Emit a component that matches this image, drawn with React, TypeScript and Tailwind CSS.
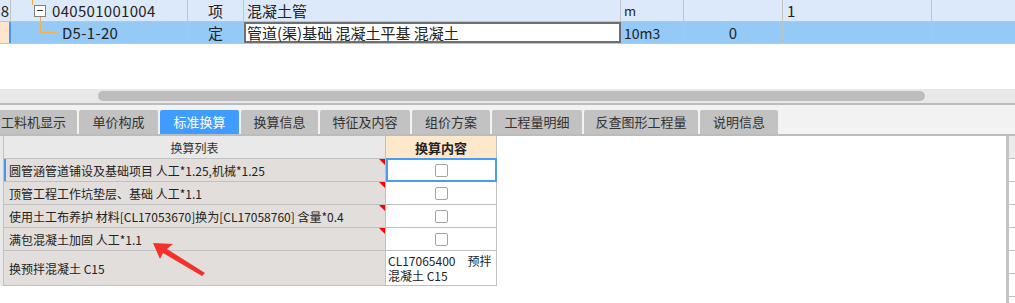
const rows = [
  { text: "圆管涵管道铺设及基础项目 人工*1.25,机械*1.25", active: true },
  { text: "顶管工程工作坑垫层、基础 人工*1.1" },
  { text: "使用土工布养护 材料[CL17053670]换为[CL17058760] 含量*0.4" },
  { text: "满包混凝土加固 人工*1.1" },
];

const tabs = [
  { label: "工料机显示", w: "w-[87px]" },
  { label: "单价构成", w: "w-[79px]" },
  { label: "标准换算", w: "w-[79px]", active: true },
  { label: "换算信息", w: "w-[77px]" },
  { label: "特征及内容", w: "w-[90px]" },
  { label: "组价方案", w: "w-[78px]" },
  { label: "工程量明细", w: "w-[90px]" },
  { label: "反查图形工程量", w: "w-[114px]" },
  { label: "说明信息", w: "w-[78px]" },
];

function Checkbox() {
  return <div className="w-[13px] h-[13px] rounded-[2px] border border-[#a3a3a3] bg-white" />;
}

function RedMark() {
  // 단가 수정 표시 (빨간 삼각형)
  return (
    <svg className="absolute right-0 top-0" width="6" height="6" viewBox="0 0 6 6">
      <polygon points="0,0 6,0 6,6" fill="#ff0000" />
    </svg>
  );
}

export default function App() {
  return (
    <div className="relative w-[1015px] h-[303px] overflow-hidden bg-white font-['Noto_Sans_CJK_SC',sans-serif] text-[#222]">
      {/* 상단 그리드 */}
      <div className="flex h-[22px] border-b border-[#c3c3c3] bg-[#dce9fb] text-[15px] leading-none">
        <div className="w-[11px] shrink-0 border-r border-[#c3c3c3] flex items-center justify-end pr-[1px]">8</div>
        <div className="relative w-[177px] shrink-0 border-r border-[#c3c3c3] flex items-center pl-[23px]">
          <svg className="absolute left-0 top-0" width="40" height="22">
            <line x1="21.5" y1="0" x2="21.5" y2="5" stroke="#f5b04a" />
            <line x1="29.5" y1="17" x2="29.5" y2="22" stroke="#f5b04a" />
          </svg>
          <div className="relative w-[12px] h-[12px] border border-[#808080] bg-white flex items-center justify-center">
            <div className="w-[6px] h-[1px] bg-[#333]" />
          </div>
          <span className="ml-[6px] tracking-[0.3px]">040501001004</span>
        </div>
        <div className="w-[56px] shrink-0 border-r border-[#c3c3c3] flex items-center justify-center">项</div>
        <div className="w-[377px] shrink-0 border-r border-[#c3c3c3] flex items-center pl-[3px]">混凝土管</div>
        <div className="w-[63px] shrink-0 border-r border-[#c3c3c3] flex items-center pl-[3px] text-[13px]">m</div>
        <div className="w-[99px] shrink-0 border-r border-[#c3c3c3]" />
        <div className="w-[149px] shrink-0 border-r border-[#c3c3c3] flex items-center pl-[4px]">1</div>
        <div className="flex-1" />
      </div>
      <div className="flex h-[22px] border-b border-[#c3c3c3] bg-[#95c9f6] text-[15px] leading-none">
        <div className="w-[11px] shrink-0 bg-[#fde6cc] border-r-2 border-[#4b97f0]" />
        <div className="relative w-[177px] shrink-0 border-r border-[#c3c3c3] flex items-center pl-[51px]">
          <svg className="absolute left-0 top-0" width="50" height="22">
            <polyline points="29.5,0 29.5,10.5 46,10.5" fill="none" stroke="#f5b04a" />
          </svg>
          <span className="tracking-[0.3px]">D5-1-20</span>
        </div>
        <div className="w-[56px] shrink-0 border-r border-[#c3c3c3] flex items-center justify-center">定</div>
        <div className="w-[377px] shrink-0 border-2 border-[#6f6f6f] bg-white flex items-center pl-[1px]">管道(渠)基础 混凝土平基 混凝土</div>
        <div className="w-[63px] shrink-0 border-r border-[#c3c3c3] flex items-center pl-[3px] text-[14px]">10m3</div>
        <div className="w-[99px] shrink-0 border-r border-[#c3c3c3] flex items-center justify-center">0</div>
        <div className="w-[149px] shrink-0 border-r border-[#c3c3c3]" />
        <div className="flex-1" />
      </div>

      <div className="h-[45px]" />

      {/* 가로 스크롤바 */}
      <div className="h-[14px] bg-[#e8e8e8] flex items-center">
        <div className="ml-[98px] w-[827px] h-[10px] rounded-full bg-[#bdbdbd]" />
      </div>
      <div className="h-[2px] bg-[#bcbcbc]" />

      {/* 탭 */}
      <div className="h-[29px] bg-[#f2f2f2] flex items-end gap-[2px] -ml-[10px] pl-0">
        {tabs.map((t) => (
          <div
            key={t.label}
            className={`${t.w} h-[24px] shrink-0 rounded-t-[2px] flex items-center justify-center text-[13px] ${
              t.active ? "bg-[#409dff] text-white" : "bg-[#c2c2c2] text-[#333]"
            }`}
          >
            {t.label}
          </div>
        ))}
      </div>
      <div className="h-[2px] bg-[#bcbcbc]" />

      {/* 하단 패널 */}
      <div className="flex text-[12px] leading-[15px]">
        <div className="w-[4px] shrink-0 h-[150px] bg-[#e8e8e8] border-r border-[#c0c0c0]" />
        <div className="w-[493px] shrink-0">
          <div className="flex h-[23px] border-b border-[#c0c0c0]">
            <div className="w-[382px] shrink-0 bg-[#e9e9e9] border-r border-[#c0c0c0] flex items-center justify-center text-[#333]">换算列表</div>
            <div className="w-[111px] shrink-0 bg-[#fde8cb] border-r border-[#c0c0c0] flex items-center justify-center font-bold text-[13px]">换算内容</div>
          </div>
          {rows.map((r) => (
            <div key={r.text} className="flex h-[23px] border-b border-[#c0c0c0]">
              <div
                className={`relative w-[382px] shrink-0 bg-[#e1dedb] border-r border-[#c0c0c0] flex items-center pl-[3px] ${
                  r.active ? "border-l-2 border-l-[#4b97f0]" : "border-l-2 border-l-[#e1dedb]"
                }`}
              >
                {r.text}
                <RedMark />
              </div>
              <div
                className={`w-[111px] shrink-0 flex items-center justify-center ${
                  r.active ? "border-2 border-[#4a9cf3] -mt-px h-[24px]" : "border-r border-[#c0c0c0]"
                }`}
              >
                <Checkbox />
              </div>
            </div>
          ))}
          <div className="flex h-[35px] border-b border-[#c0c0c0]">
            <div className="w-[382px] shrink-0 bg-[#e1dedb] border-r border-[#c0c0c0] flex items-center pl-[5px]">换预拌混凝土 C15</div>
            <div className="w-[111px] shrink-0 border-r border-[#c0c0c0] flex flex-col justify-center pl-[2px]">
              <span>CL17065400　预拌</span>
              <span>混凝土 C15</span>
            </div>
          </div>
        </div>
        <div className="flex-1" />
        <div className="w-[3px] shrink-0 h-[167px] bg-[#c4c4c4]" />
        <div className="w-[6px] shrink-0">
          <div className="h-[23px] bg-[#ececec] border-b border-[#c0c0c0]" />
          <div className="h-[23px] border-b border-[#c0c0c0]" />
          <div className="h-[23px] border-b border-[#c0c0c0]" />
          <div className="h-[23px] border-b border-[#c0c0c0]" />
          <div className="h-[23px] border-b border-[#c0c0c0]" />
          <div className="h-[23px] border-b border-[#c0c0c0]" />
          <div className="h-[23px] border-b border-[#c0c0c0]" />
        </div>
      </div>

      {/* 빨간 화살표 */}
      <svg className="absolute left-0 top-0 pointer-events-none" width="1015" height="303">
        <polygon
          points="153,243 173,244 167,249 205,273 202,276 163,253 160,259"
          fill="#f4302a"
        />
      </svg>
    </div>
  );
}
